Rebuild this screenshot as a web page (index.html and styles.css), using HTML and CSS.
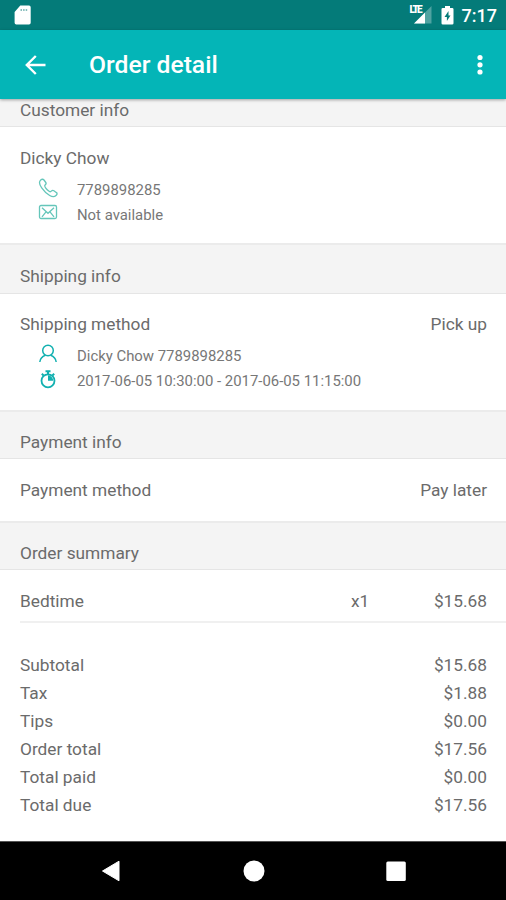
FILE: index.html
```html
<!DOCTYPE html>
<html lang="en">
<head>
<meta charset="utf-8">
<title>Order detail</title>
<link rel="stylesheet" href="styles.css">
</head>
<body>
<div class="screen">
  <div class="statusbar">
    <svg class="sd" width="17" height="20" viewBox="0 0 17 20"><path fill="#fff" d="M6.300 .5H15a1.700 1.700 0 0 1 1.700 1.700v15.600A1.700 1.700 0 0 1 15 19.500H2.300A1.700 1.700 0 0 1 .6 17.800V7z"/><path stroke="#5fa8a6" stroke-width="1.600" stroke-dasharray="1.500 1.100" d="M6.500 5h7"/></svg>
    <div class="status-right">
      <div class="signal"><span class="lte">LTE</span><svg width="19" height="18" viewBox="0 0 19 18"><path fill="#fff" fill-opacity=".3" d="M18.500 0v17.500H1z"/><path fill="#fff" d="M12 6.500v11H1z"/></svg></div>
      <svg class="battery" width="13" height="19" viewBox="0 0 13 19"><path fill="#fff" d="M4 0h5v2h2.200A1.300 1.300 0 0 1 12.500 3.300v14A1.300 1.300 0 0 1 11.200 18.600H1.800A1.300 1.300 0 0 1 .5 17.300v-14A1.300 1.300 0 0 1 1.800 2H4z"/><path fill="#047b79" d="M7.500 5 3.500 11h2.400v4L9.500 9.500H7.500z"/></svg>
      <span class="clock">7:17</span>
    </div>
  </div>
  <header class="toolbar">
    <svg class="back" width="21" height="20" viewBox="0 0 21 20"><path fill="none" stroke="#fff" stroke-width="2.400" d="M20.500 10H2M10.800 1 1.800 10l9 9"/></svg>
    <h1>Order detail</h1>
    <svg class="more" width="6" height="22" viewBox="0 0 6 22"><g fill="#fff"><circle cx="3" cy="3.500" r="2.600"/><circle cx="3" cy="10.800" r="2.600"/><circle cx="3" cy="18" r="2.600"/></g></svg>
  </header>
  <main>
    <h2 class="head head-first">Customer info</h2>
    <section class="customer">
      <div class="row"><span>Dicky Chow</span></div>
      <div class="detail"><svg class="light" width="20" height="20" viewBox="0 0 20 20"><path d="M2.200 2.600C3.500 1 5 .8 6 2l1.800 2.500c.7 1 .2 1.800-.7 2.600-.8.700-.4 1.400.5 2.700 1 1.400 2.100 2.500 3.500 3.500 1 .7 1.600.6 2.200-.1.800-.9 1.600-1.200 2.600-.5l2.300 1.700c1.300.9 1.100 2-.2 3.200-1.600 1.500-3.500 1.600-6.300-.1-3-1.800-5.800-4.600-8-7.700C1.500 6.800.7 4.600 2.200 2.600z"/></svg><span>7789898285</span></div>
      <div class="detail"><svg class="light" width="20" height="20" viewBox="0 0 20 20"><rect x="1.500" y="2.500" width="17" height="13" rx="1.500"/><path d="m4 4.800 6 5.500 6-5.500M4 13.800l4-5M16 13.800l-4-5"/></svg><span>Not available</span></div>
    </section>
    <h2 class="head head-tall">Shipping info</h2>
    <section class="shipping">
      <div class="row"><span>Shipping method</span><span>Pick up</span></div>
      <div class="detail"><svg width="20" height="20" viewBox="0 0 20 20"><circle cx="10" cy="6.500" r="5.300"/><path d="M1.800 18c.4-3.500 2.500-5.500 5.500-6.700M18.200 18c-.4-3.500-2.500-5.500-5.500-6.700"/></svg><span>Dicky Chow 7789898285</span></div>
      <div class="detail"><svg width="20" height="20" viewBox="0 0 20 20"><circle cx="10" cy="11.800" r="6.500" stroke-width="1.800"/><path stroke-width="2" d="M7.500 2.200h5M10 2v3.500M3.800 4.800l1.800 1.700M16.200 4.800l-1.800 1.700"/><path class="fill" d="M10 11.800V6.200a5.600 5.600 0 0 1 5.200 5.600z"/></svg><span>2017-06-05 10:30:00 - 2017-06-05 11:15:00</span></div>
    </section>
    <h2 class="head">Payment info</h2>
    <section class="payment">
      <div class="row"><span>Payment method</span><span>Pay later</span></div>
    </section>
    <h2 class="head">Order summary</h2>
    <section class="summary">
      <div class="item"><span>Bedtime</span><span class="qty">x1</span><span class="price">$15.68</span></div>
      <div class="totals">
        <div class="total"><span>Subtotal</span><span>$15.68</span></div>
        <div class="total"><span>Tax</span><span>$1.88</span></div>
        <div class="total"><span>Tips</span><span>$0.00</span></div>
        <div class="total"><span>Order total</span><span>$17.56</span></div>
        <div class="total"><span>Total paid</span><span>$0.00</span></div>
        <div class="total"><span>Total due</span><span>$17.56</span></div>
      </div>
    </section>
  </main>
  <nav class="navbar">
    <svg width="20" height="22" viewBox="0 0 20 22"><path fill="#fff" stroke="#fff" stroke-linejoin="round" d="M1.500 11 18 1.200v19.600z"/></svg>
    <svg width="22" height="22" viewBox="0 0 22 22"><circle cx="11" cy="11" r="10.500" fill="#fff"/></svg>
    <svg width="20" height="22" viewBox="0 0 20 22"><rect x=".3" y="1.500" width="19.500" height="19.500" rx="1.500" fill="#fff"/></svg>
  </nav>
</div>
</body>
</html>
```

FILE: styles.css
```css
* { box-sizing: border-box; }
body { margin: 0; background: #fff; }
.screen {
  width: 506px;
  height: 900px;
  display: flex;
  flex-direction: column;
  overflow: hidden;
  font: 17.3px/24px Roboto, sans-serif;
  color: #6b6b6b;
}
svg { display: block; flex: none; }
h1, h2 { margin: 0; font-weight: 400; font-size: inherit; }

.statusbar {
  height: 30px;
  flex: none;
  background: #047b79;
  display: flex;
  align-items: center;
  justify-content: space-between;
  padding: 0 9px 0 14px;
}
.status-right { display: flex; align-items: center; color: #fff; }
.signal { display: flex; align-items: center; position: relative; width: 23px; justify-content: flex-end; margin-right: 9px; }
.lte { position: absolute; left: 1px; top: -1px; font-size: 10px; line-height: 10px; font-weight: 900; letter-spacing: -1.6px; }
.clock { font-size: 18px; font-weight: 500; margin-left: 8px; padding-top: 1px; }

.toolbar {
  height: 69px;
  flex: none;
  background: #04b5b7;
  color: #fff;
  display: flex;
  align-items: center;
  padding: 0 23px 0 25px;
  position: relative;
  box-shadow: 0 1px 3px rgba(0, 0, 0, .35);
}
.toolbar h1 { flex: 1; margin-left: 43px; font-size: 24.7px; font-weight: 500; line-height: 32px; padding-top: 1px; }

main { height: 742px; flex: none; }
.head {
  height: 49px;
  padding: 18px 20px 0;
  background: #f4f4f4;
  border-top: 2px solid #ebebeb;
  border-bottom: 1px solid #e5e5e5;
}
.head-tall { height: 51px; padding-top: 19px; }
.head-first { height: 28px; padding-top: 0; border-top: 0; line-height: 23px; }
section { background: #fff; }
.customer { height: 116px; padding-top: 19px; }
.shipping { height: 116px; padding-top: 18px; }
.payment { height: 62px; padding-top: 19px; }
.row { display: flex; justify-content: space-between; padding: 0 19px 0 20px; }
.detail { display: flex; align-items: center; height: 25px; padding-left: 38px; font-size: 14.9px; color: #777; }
.row + .detail { margin-top: 7px; }
.detail span { margin-left: 19px; }
.detail svg { fill: none; stroke: #12b0b0; stroke-width: 1.5; margin-bottom: 3px; }
.detail svg.light { stroke: #65c6ba; stroke-width: 1.3; }
.detail .fill { fill: #12b0b0; stroke: none; }

.item { display: flex; height: 53px; margin-left: 20px; padding: 19px 19px 0 0; border-bottom: 2px solid #f0f0f0; }
.item span:first-child { flex: 1; }
.qty { width: 18px; }
.price { width: 118px; text-align: right; }
.totals { padding: 28.5px 19px 0 20px; }
.total { display: flex; justify-content: space-between; height: 28.15px; line-height: 26px; }

.navbar {
  height: 59px;
  flex: none;
  background: #000;
  border-top: 1px solid #555;
  display: flex;
  align-items: center;
  justify-content: space-between;
  padding: 0 100px 1px 101px;
}
```
